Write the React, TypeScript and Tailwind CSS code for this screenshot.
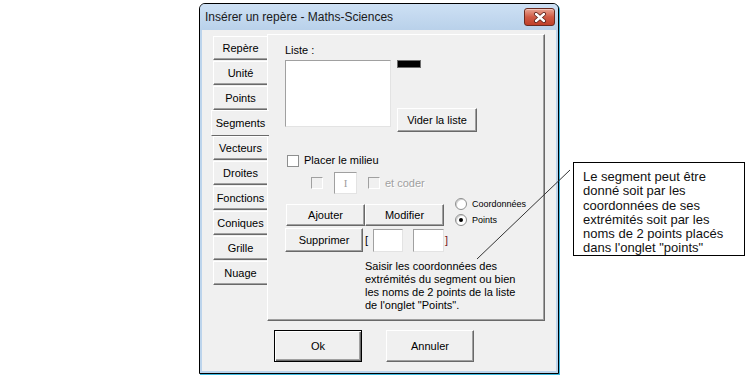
import React from "react";

const raised =
  "bg-[#f0f0f0] border border-t-white border-l-white border-r-[#696969] border-b-[#696969] shadow-[inset_-1px_-1px_0_#a0a0a0]";
const sunken =
  "bg-white border border-t-[#a0a0a0] border-l-[#a0a0a0] border-r-[#e3e3e3] border-b-[#e3e3e3]";

const tabs = ["Repère", "Unité", "Points", "Segments", "Vecteurs", "Droites", "Fonctions", "Coniques", "Grille", "Nuage"];

const Tab = ({ label, selected }: { label: string; selected: boolean }) => {
  if (selected) {
    return (
      <div className="relative z-10 -mt-[1px] h-[26px] w-[58px] bg-[#f0f0f0] border-t border-l border-b border-t-white border-l-white border-b-[#696969] flex items-center justify-center">
        {label}
      </div>
    );
  }
  return (
    <div className="ml-[2px] mb-[1px] h-[24px] w-[54px] bg-[#f0f0f0] border-t border-l border-b border-t-white border-l-white border-b-[#696969] shadow-[inset_0_-1px_0_#a0a0a0] flex items-center justify-center">
      {label}
    </div>
  );
};

const Checkbox = ({ disabled }: { disabled?: boolean }) => (
  <div
    className={`w-[12px] h-[12px] border ${
      disabled
        ? "bg-[#f0f0f0] border-t-[#a0a0a0] border-l-[#a0a0a0] border-r-white border-b-white"
        : "bg-white border-[#8e8f8f]"
    }`}
  />
);

const Radio = ({ checked }: { checked?: boolean }) => (
  <div className="w-[12px] h-[12px] rounded-full bg-white border border-[#8e8f8f] shadow-[inset_1px_1px_0_#d0d0d0] flex items-center justify-center">
    {checked && <div className="w-[4px] h-[4px] rounded-full bg-black" />}
  </div>
);

export default function App() {
  return (
    <div className="relative w-[747px] h-[378px] bg-white overflow-hidden font-['Liberation_Sans',Arial,sans-serif] text-black">
      <div className="flex items-start">
        {/* window */}
        <div className="ml-[199px] mt-[3px] w-[360px] h-[371px] border border-black rounded-t-[6px] bg-[#bcd4ec] shadow-[1px_1px_0_#3cb8e0] flex flex-col">
          <div className="h-[26px] flex items-center justify-between rounded-t-[5px] bg-gradient-to-b from-[#cde0f4] to-[#b9d1ea]">
            <span className="ml-[5px] text-[12px] text-[#1a1a1a]">Insérer un repère - Maths-Sciences</span>
            <div className="mr-[3px] w-[31px] h-[18px] rounded-[3px] border border-[#6b2b20] bg-gradient-to-b from-[#e8a493] via-[#cf5a45] to-[#c0402a] flex items-center justify-center shadow-[inset_0_1px_0_#f3c4b8]">
              <svg width="14" height="11" viewBox="0 0 14 11">
                <path d="M3 2 L11 9 M11 2 L3 9" stroke="#5a2018" strokeWidth="4" strokeLinecap="round" />
                <path d="M3 2 L11 9 M11 2 L3 9" stroke="#ffffff" strokeWidth="2.4" strokeLinecap="round" />
              </svg>
            </div>
          </div>

          {/* body */}
          <div className="mx-[2px] mb-[2px] flex-1 bg-[#f0f0f0] flex flex-col text-[11px] leading-[13px]">
            <div className="flex pt-[4px]">
              <div className="ml-[9px] mt-[2px] w-[56px] flex flex-col">
                {tabs.map((t) => (
                  <Tab key={t} label={t} selected={t === "Segments"} />
                ))}
              </div>

              {/* panel */}
              <div className="w-[278px] h-[287px] bg-[#f0f0f0] border border-t-white border-l-white border-r-[#696969] border-b-[#696969] shadow-[inset_-1px_-1px_0_#a0a0a0] pl-[17px] pt-[9px] flex flex-col">
                <div className="flex">
                  <div className="flex flex-col">
                    <span>Liste :</span>
                    <div className={`mt-[3px] w-[106px] h-[67px] ${sunken}`} />
                  </div>
                  <div className="ml-[6px] flex flex-col items-start">
                    <div className="mt-[16px] w-[24px] h-[8px] bg-black border border-[#6d6d6d]" />
                    <button className={`mt-[40px] w-[80px] h-[24px] ${raised}`}>Vider la liste</button>
                  </div>
                </div>

                <div className="mt-[22px] ml-[2px] flex items-center gap-[5px]">
                  <Checkbox />
                  <span>Placer le milieu</span>
                </div>

                <div className="mt-[5px] ml-[26px] flex items-center">
                  <Checkbox disabled />
                  <div className={`ml-[11px] w-[23px] h-[22px] ${sunken} flex items-center justify-center text-[#a0a0a0] font-['Liberation_Serif',serif]`}>I</div>
                  <div className="ml-[11px]">
                    <Checkbox disabled />
                  </div>
                  <span className="ml-[5px] text-[#a0a0a0] [text-shadow:1px_1px_0_#ffffff]">et coder</span>
                </div>

                <div className="mt-[4px] flex items-start">
                  <div className="pt-[6px] flex flex-col">
                    <div className="ml-[1px] flex">
                      <button className={`w-[79px] h-[22px] ${raised}`}>Ajouter</button>
                      <button className={`w-[79px] h-[22px] ${raised}`}>Modifier</button>
                    </div>
                    <div className="mt-[2px] flex items-center">
                      <button className={`w-[78px] h-[24px] ${raised}`}>Supprimer</button>
                      <span className="ml-[2px] w-[8px]">[</span>
                      <div className={`w-[30px] h-[23px] ${sunken}`} />
                      <div className={`ml-[10px] w-[31px] h-[23px] ${sunken}`} />
                      <span className="ml-[1px] text-[#7a1a1a]">]</span>
                    </div>
                  </div>
                  <div className="ml-[7px] flex flex-col gap-[4px] text-[9px] leading-[12px]">
                    <div className="flex items-center gap-[5px]">
                      <Radio />
                      <span>Coordonnées</span>
                    </div>
                    <div className="flex items-center gap-[5px]">
                      <Radio checked />
                      <span>Points</span>
                    </div>
                  </div>
                </div>

                <div className="mt-[8px] ml-[80px] w-[160px]">
                  Saisir les coordonnées des
                  <br />
                  extrémités du segment ou bien
                  <br />
                  les noms de 2 points de la liste
                  <br />
                  de l'onglet "Points".
                </div>
              </div>
            </div>

            <div className="mt-[9px] ml-[72px] flex gap-[24px]">
              <button className="w-[88px] h-[32px] border border-black bg-[#f0f0f0] shadow-[inset_1px_1px_0_#ffffff,inset_-1px_-1px_0_#696969,inset_-2px_-2px_0_#a0a0a0]">
                Ok
              </button>
              <button className={`w-[88px] h-[32px] ${raised}`}>Annuler</button>
            </div>
          </div>
        </div>

        {/* callout */}
        <div className="ml-[14px] mt-[162px] w-[172px] h-[94px] border border-black bg-white pl-[9px] pt-[7px] text-[13px] leading-[14.3px] text-[#111]">
          Le segment peut être
          <br />
          donné soit par les
          <br />
          coordonnées de ses
          <br />
          extrémités soit par les
          <br />
          noms de 2 points placés
          <br />
          dans l'onglet "points"
        </div>
      </div>

      <svg className="absolute inset-0 pointer-events-none" width="747" height="378">
        <line x1="477" y1="259" x2="570" y2="170" stroke="#333" strokeWidth="1" />
      </svg>
    </div>
  );
}
